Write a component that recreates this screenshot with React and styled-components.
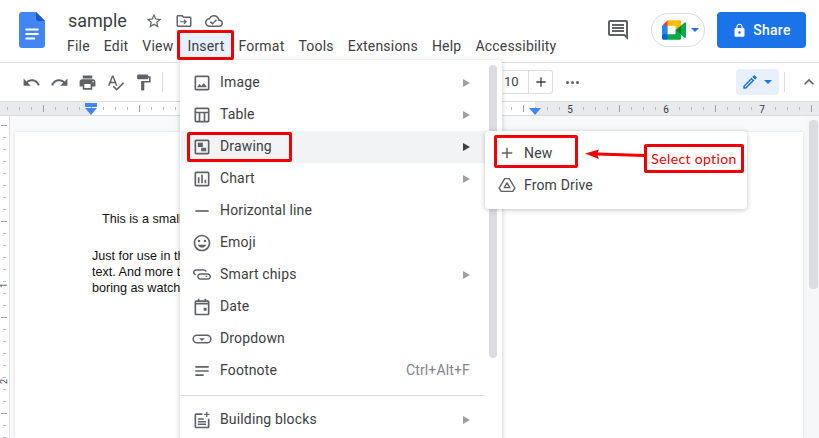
import React from 'react';
import styled, { createGlobalStyle } from 'styled-components';

const GlobalStyle = createGlobalStyle`
  html, body {
    margin: 0;
    padding: 0;
    background: #fff;
    overflow: hidden;
  }
  body {
    font-family: Roboto, "Liberation Sans", sans-serif;
  }
`;

const Shell = styled.div`
  position: relative;
  width: 819px;
  height: 438px;
  overflow: hidden;
  display: flex;
  flex-direction: column;
  background: #fff;
`;

const Header = styled.header`
  height: 63px;
  flex: none;
  display: flex;
  align-items: flex-start;
  padding: 12px 13px 0 19px;
  box-sizing: border-box;
  border-bottom: 1px solid #dadce0;
`;

const TitleBlock = styled.div`
  margin-left: 22px;
  display: flex;
  flex-direction: column;
  flex: 1;
`;

const TitleRow = styled.div`
  display: flex;
  align-items: center;
  height: 18px;
  margin-left: 1px;
`;

const Title = styled.span`
  font-size: 18px;
  color: #3c4043;
  width: 77px;
  line-height: 18px;
`;

const TitleIcons = styled.div`
  display: flex;
  gap: 12px;
`;

const NavBar = styled.nav`
  display: flex;
  gap: 14px;
  margin-top: 8px;
`;

const NavItem = styled.span`
  position: relative;
  font-size: 14px;
  line-height: 16px;
  letter-spacing: 0.2px;
  color: #3c4043;

  ${p => p.$active && `
    &::before {
      content: '';
      position: absolute;
      left: -7px;
      right: -7px;
      top: -4px;
      bottom: -4px;
      background: #e8f0fe;
      z-index: 0;
    }
    &::after {
      content: '';
      position: absolute;
      left: -10px;
      right: -10px;
      top: -8px;
      bottom: -6px;
      border: 3px solid #f00000;
      border-radius: 2px;
    }
  `}
`;

const NavLabel = styled.span`
  position: relative;
  z-index: 1;
`;

const HeaderRight = styled.div`
  display: flex;
  align-items: center;
  height: 36px;
`;

const MeetPill = styled.div`
  width: 54px;
  height: 34px;
  box-sizing: border-box;
  border: 1px solid #dadce0;
  border-radius: 17px;
  margin: 0 12px 0 21px;
  display: flex;
  align-items: center;
  padding-left: 10px;
  gap: 5px;
`;

const ShareButton = styled.button`
  width: 89px;
  height: 36px;
  border: none;
  border-radius: 4px;
  background: #1a73e8;
  color: #fff;
  font: 500 14px Roboto, sans-serif;
  letter-spacing: 0.25px;
  display: flex;
  align-items: center;
  justify-content: center;
  gap: 6px;
  padding: 0;
`;

const Toolbar = styled.div`
  height: 38px;
  flex: none;
  display: flex;
  align-items: center;
  padding-left: 22px;
  box-sizing: border-box;
`;

const ToolGroup = styled.div`
  display: flex;
  align-items: center;
  gap: ${p => p.$gap || 9}px;
  margin-left: ${p => p.$left || 0}px;
`;

const VDivider = styled.span`
  width: 1px;
  height: 20px;
  background: #dadce0;
  margin: 0 ${p => p.$right || 0}px 0 ${p => p.$left || 0}px;
`;

const SizeBox = styled.div`
  display: flex;
  height: 24px;
  box-sizing: border-box;
  border: 1px solid #dadce0;
  border-left: none;
  border-radius: 0 3px 3px 0;
`;

const SizeValue = styled.span`
  width: 26px;
  box-sizing: border-box;
  padding-left: 1px;
  font-size: 13px;
  line-height: 22px;
  color: #3c4043;
  border-right: 1px solid #dadce0;
`;

const SizePlus = styled.span`
  width: 23px;
  display: flex;
  align-items: center;
  justify-content: center;
`;

const MoreDots = styled.span`
  display: flex;
  gap: 2px;
  margin-left: 4px;

  i {
    width: 3px;
    height: 3px;
    border-radius: 50%;
    background: #5f6368;
  }
`;

const EditMode = styled.div`
  width: 43px;
  height: 26px;
  margin-left: 157px;
  border-radius: 4px;
  background: #e8f0fe;
  display: flex;
  align-items: center;
  padding-left: 5px;
  box-sizing: border-box;
  gap: 5px;
`;

const Caret = styled.span`
  width: 0;
  height: 0;
  border-left: 4px solid transparent;
  border-right: 4px solid transparent;
  border-top: 4px solid ${p => p.$color || '#1a73e8'};
`;

const RulerBar = styled.div`
  height: 15px;
  flex: none;
  box-sizing: border-box;
  border-top: 1px solid #dadce0;
  border-bottom: 1px solid #dadce0;
`;

const Workspace = styled.div`
  flex: 1;
  min-height: 0;
  display: flex;
  background: #f8f9fa;
`;

const SideRuler = styled.div`
  width: 10px;
  flex: none;
  background: #fff;
  border-right: 1px solid #dadce0;
  box-sizing: border-box;
`;

const PageArea = styled.div`
  flex: 1;
  min-width: 0;
  padding: 16px 3px 0 5px;
`;

const Page = styled.div`
  height: 100%;
  background: #fff;
  box-shadow: 0 0 3px rgba(60, 64, 67, 0.18);
  padding-top: 79px;
  box-sizing: border-box;
`;

const DocLine = styled.div`
  font: 12.6px/16px "Liberation Sans", Arial, sans-serif;
  color: #111;
  white-space: nowrap;
  margin-left: ${p => p.$indent}px;
  margin-top: ${p => p.$gap || 0}px;
`;

const ScrollTrack = styled.div`
  width: 13px;
  flex: none;
  background: #f6f7f9;
  padding: 4px 1px 0 3px;
  box-sizing: border-box;
`;

const ScrollThumb = styled.div`
  height: 169px;
  border-radius: 4px;
  background: #dadce0;
`;

const Menu = styled.div`
  position: absolute;
  left: 180px;
  top: 60px;
  width: 322px;
  height: 390px;
  background: #fff;
  border-radius: 4px;
  box-shadow: 0 1px 5px rgba(60, 64, 67, 0.3);
  padding-top: 7px;
  box-sizing: border-box;
`;

const MenuRow = styled.div`
  position: relative;
  height: 32px;
  width: 309px;
  margin-left: 1px;
  display: flex;
  align-items: center;
  padding: 0 20px 0 11px;
  box-sizing: border-box;
  background: ${p => (p.$hover ? '#f1f3f4' : 'transparent')};
  font-size: 14px;
  letter-spacing: 0.15px;
  color: #3c4043;
`;

const MenuLabel = styled.span`
  flex: 1;
  margin: -2px 0 0 8px;
`;

const Shortcut = styled.span`
  color: #80868b;
  font-size: 14px;
  margin-top: -2px;
`;

const SubArrow = styled.span`
  width: 0;
  height: 0;
  border-top: 4px solid transparent;
  border-bottom: 4px solid transparent;
  border-left: 7px solid ${p => (p.$hover ? '#3c4043' : '#9aa0a6')};
`;

const MenuRule = styled.div`
  width: 304px;
  height: 1px;
  background: #dadce0;
  margin: 8px 0 8px 1px;
`;

const MenuScroll = styled.div`
  position: absolute;
  left: 309px;
  top: 5px;
  width: 8px;
  height: 293px;
  border-radius: 4px;
  background: #dadce0;
`;

const Highlight = styled.div`
  position: absolute;
  border: 3px solid #f00000;
  border-radius: 2px;
  box-sizing: border-box;
`;

const DrawingBox = styled(Highlight)`
  left: 6px;
  top: 1px;
  width: 105px;
  height: 30px;
`;

const SubMenu = styled.div`
  position: absolute;
  left: 485px;
  top: 131px;
  width: 262px;
  height: 78px;
  background: #fff;
  border-radius: 4px;
  box-shadow: 0 1px 5px rgba(60, 64, 67, 0.3);
  padding-top: 6px;
  box-sizing: border-box;
`;

const SubRow = styled.div`
  position: relative;
  height: 32px;
  display: flex;
  align-items: center;
  gap: ${p => p.$gap}px;
  padding-left: ${p => p.$pad}px;
  font-size: 14px;
  letter-spacing: 0.15px;
  color: #3c4043;
`;

const NewBox = styled(Highlight)`
  left: 9px;
  top: -2px;
  width: 84px;
  height: 33px;
`;

const Callout = styled.div`
  position: absolute;
  left: 644px;
  top: 144px;
  width: 100px;
  height: 29px;
  box-sizing: border-box;
  border: 3px solid #f00000;
  border-radius: 2px;
  background: #fff;
  color: #f00000;
  font: 14px/23px Lato, "Liberation Sans", sans-serif;
  letter-spacing: 0.35px;
  text-align: center;
  white-space: nowrap;
`;

const ArrowSvg = styled.svg`
  position: absolute;
  left: 583px;
  top: 145px;
`;

const Glyph = styled.svg`
  display: block;
  flex: none;
  fill: ${p => p.$color || '#5f6368'};
`;

const paths = {
  undo: 'M12.5 8c-2.65 0-5.05.99-6.9 2.6L2 7v9h9l-3.62-3.62c1.39-1.16 3.16-1.88 5.12-1.88 3.54 0 6.55 2.31 7.6 5.5l2.37-.78C21.08 11.03 17.15 8 12.5 8z',
  redo: 'M18.4 10.6C16.55 8.99 14.15 8 11.5 8c-4.65 0-8.58 3.03-9.96 7.22L3.9 16c1.05-3.19 4.05-5.5 7.6-5.5 1.95 0 3.73.72 5.12 1.88L13 16h9V7l-3.6 3.6z',
  print: 'M19 8H5c-1.66 0-3 1.34-3 3v6h4v4h12v-4h4v-6c0-1.66-1.34-3-3-3zm-3 11H8v-5h8v5zm3-7c-.55 0-1-.45-1-1s.45-1 1-1 1 .45 1 1-.45 1-1 1zm-1-9H6v4h12V3z',
  spell: 'M12.45 16h2.09L9.43 3H7.57L2.46 16h2.09l1.12-3h5.64l1.14 3zm-6.02-5L8.5 5.48 10.57 11H6.43zm15.16.59l-8.09 8.09L9.83 16l-1.41 1.41 5.09 5.09L23 13l-1.41-1.41z',
  paint: 'M18 4V3c0-.55-.45-1-1-1H5c-.55 0-1 .45-1 1v4c0 .55.45 1 1 1h12c.55 0 1-.45 1-1V6h1v4H9v11c0 .55.45 1 1 1h2c.55 0 1-.45 1-1v-9h8V4h-3z',
  star: 'M22 9.24l-7.19-.62L12 2 9.19 8.63 2 9.24l5.46 4.73L5.82 21 12 17.27 18.18 21l-1.63-7.03L22 9.24zM12 15.4l-3.76 2.27 1-4.28-3.32-2.88 4.38-.38L12 6.1l1.71 4.04 4.38.38-3.32 2.88 1 4.28L12 15.4z',
  folder: 'M20 6h-8l-2-2H4c-1.1 0-2 .9-2 2v12c0 1.1.9 2 2 2h16c1.1 0 2-.9 2-2V8c0-1.1-.9-2-2-2zm0 12H4V6h5.17l2 2H20v10zM12.6 9.6l-1.2 1.2 1.4 1.4H7v1.6h5.8l-1.4 1.4 1.2 1.2 3.4-3.4z',
  cloud: 'M19.35 10.04C18.67 6.59 15.64 4 12 4 9.11 4 6.6 5.64 5.35 8.04 2.34 8.36 0 10.91 0 14c0 3.31 2.69 6 6 6h13c2.76 0 5-2.24 5-5 0-2.64-2.05-4.78-4.65-4.96zM19 18H6c-2.21 0-4-1.79-4-4 0-2.05 1.53-3.76 3.56-3.97l1.07-.11.5-.95C8.08 7.14 9.94 6 12 6c2.62 0 4.88 1.86 5.39 4.43l.3 1.5 1.53.11c1.56.1 2.78 1.41 2.78 2.96 0 1.65-1.35 3-3 3zm-9-3.82l-2.09-2.09L6.5 13.5 10 17l6.01-6.01-1.41-1.41z',
  comment: 'M21.99 4c0-1.1-.89-2-1.99-2H4c-1.1 0-2 .9-2 2v12c0 1.1.9 2 2 2h14l4 4-.01-18zM20 4v13.17L18.83 16H4V4h16zM6 12h12v2H6zm0-3h12v2H6zm0-3h12v2H6z',
  lock: 'M18 8h-1V6c0-2.76-2.24-5-5-5S7 3.24 7 6v2H6c-1.1 0-2 .9-2 2v10c0 1.1.9 2 2 2h12c1.1 0 2-.9 2-2V10c0-1.1-.9-2-2-2zm-6 9c-1.1 0-2-.9-2-2s.9-2 2-2 2 .9 2 2-.9 2-2 2zm3.1-9H8.9V6c0-1.71 1.39-3.1 3.1-3.1 1.71 0 3.1 1.39 3.1 3.1v2z',
  edit: 'M3 17.25V21h3.75L17.81 9.94l-3.75-3.75L3 17.25zM5.92 19H5v-.92l9.06-9.06.92.92L5.92 19zM20.71 5.63l-2.34-2.34a.996.996 0 0 0-1.41 0l-1.83 1.83 3.75 3.75 1.83-1.83a.996.996 0 0 0 0-1.41z',
  chevron: 'M7.41 15.41 12 10.83l4.59 4.58L18 14l-6-6-6 6z',
  plus: 'M19 13h-6v6h-2v-6H5v-2h6V5h2v6h6v2z',
  image: 'M19 5v14H5V5h14m0-2H5c-1.1 0-2 .9-2 2v14c0 1.1.9 2 2 2h14c1.1 0 2-.9 2-2V5c0-1.1-.9-2-2-2zm-4.86 8.86l-3 3.87L9 13.14 6 17h12l-3.86-5.14z',
  table: 'M5 3h14c1.1 0 2 .9 2 2v14c0 1.1-.9 2-2 2H5c-1.1 0-2-.9-2-2V5c0-1.1.9-2 2-2zm0 2v3h14V5H5zm0 5v9h3v-9H5zm5 0v9h4v-9h-4zm6 0v9h3v-9h-3z',
  drawing: 'M19 5v14H5V5h14m0-2H5c-1.1 0-2 .9-2 2v14c0 1.1.9 2 2 2h14c1.1 0 2-.9 2-2V5c0-1.1-.9-2-2-2zM7 7h6v5h-6zM11 12.8h6V17h-6z',
  chart: 'M19 3H5c-1.1 0-2 .9-2 2v14c0 1.1.9 2 2 2h14c1.1 0 2-.9 2-2V5c0-1.1-.9-2-2-2zm0 16H5V5h14v14zM7 10h2v7H7zm4-3h2v10h-2zm4 6h2v4h-2z',
  line: 'M4 11h16v2H4z',
  emoji: 'M12 2C6.48 2 2 6.48 2 12s4.48 10 10 10 10-4.48 10-10S17.52 2 12 2zm0 18c-4.42 0-8-3.58-8-8s3.58-8 8-8 8 3.58 8 8-3.58 8-8 8zm3.5-9a1.5 1.5 0 1 0 0-3 1.5 1.5 0 0 0 0 3zm-7 0a1.5 1.5 0 1 0 0-3 1.5 1.5 0 0 0 0 3zm3.5 6.5c2.33 0 4.31-1.46 5.11-3.5H6.89c.8 2.04 2.78 3.5 5.11 3.5z',
  chips: 'M5 5h9c1.9 0 3.4 1.3 3.8 3H16c-.3-.7-1.1-1.2-2-1.2H5C3.9 6.8 3 7.7 3 8.8s.7 1.8 1.6 2V12.6C2.6 12.4 1.2 10.8 1.2 8.8 1.2 6.7 2.9 5 5 5zm5 5h9c2.1 0 3.8 1.7 3.8 3.8s-1.7 3.8-3.8 3.8h-9c-2.1 0-3.8-1.7-3.8-3.8S7.9 10 10 10zm0 1.8c-1.1 0-2 .9-2 2s.9 2 2 2h9c1.1 0 2-.9 2-2s-.9-2-2-2h-9zm5.6 1.2h3.4l-1.7 1.8z',
  date: 'M19 4h-2V2h-2v2H9V2H7v2H5c-1.1 0-2 .9-2 2v14c0 1.1.9 2 2 2h14c1.1 0 2-.9 2-2V6c0-1.1-.9-2-2-2zm0 16H5V9h14v11zM19 7H5V6h14v1zm-5 6h3.5v3.5H14z',
  dropdown: 'M6 6.5h12c3.04 0 5.5 2.46 5.5 5.5s-2.46 5.5-5.5 5.5H6A5.5 5.5 0 0 1 .5 12 5.5 5.5 0 0 1 6 6.5zm0 1.8a3.7 3.7 0 0 0 0 7.4h12a3.7 3.7 0 0 0 0-7.4H6zM8.5 11h7L12 14.5z',
  footnote: 'M4 6h16v2H4zm0 5h16v2H4zm0 5h10v2H4z',
  blocks: 'M17 2v2.5h-2.5v1.5H17v2.5h1.5V6H21V4.5h-2.5V2H17zM5 4c-1.1 0-2 .9-2 2v14c0 1.1.9 2 2 2h14c1.1 0 2-.9 2-2v-9.500h-2V20H5V6h7.500V4H5zm2 6v1.800h7V10H7zm0 3.100v1.800h10v-1.800H7zm0 3.100V18h10v-1.800H7z',
};

const Icon = ({ name, size = 18, color }) => (
  <Glyph viewBox="0 0 24 24" width={size} height={size} $color={color}>
    <path d={paths[name]} />
  </Glyph>
);

const DriveIcon = () => (
  <svg width="18" height="18" viewBox="0 0 24 24" fill="none" stroke="#5f6368" strokeLinejoin="round">
    <path d="M9 3.500h6l7.500 12.500-2.800 4.500H4.300L1.500 16z" strokeWidth="1.900" />
    <path d="M12 9l3.700 6.500H8.300z" strokeWidth="1.800" />
  </svg>
);

const DocsLogo = () => (
  <svg width="26" height="36" viewBox="0 0 26 36">
    <path d="M3 0h14l9 9v24c0 1.700-1.300 3-3 3H3c-1.700 0-3-1.300-3-3V3c0-1.700 1.300-3 3-3z" fill="#4285f4" />
    <path d="M17 0l9 9h-6.500c-1.400 0-2.500-1.100-2.500-2.500z" fill="#1a56c4" />
    <path d="M6.500 16.500h13v2h-13zm0 4.500h13v2h-13zm0 4.500h9.500v2H6.500z" fill="#fff" />
  </svg>
);

const MeetLogo = () => (
  <svg width="24" height="20" viewBox="0 0 87.500 72">
    <path fill="#00832d" d="M49.500 36l8.530 9.750 11.470 7.330 2-17.020-2-16.640-11.690 6.440z" />
    <path fill="#0066da" d="M0 51.500V66c0 3.315 2.685 6 6 6h14.500l3-10.960-3-9.540-9.950-3z" />
    <path fill="#e94235" d="M20.500 0L0 20.500l10.550 3 9.950-3 2.950-9.410z" />
    <path fill="#2684fc" d="M20.500 20.500H0v31h20.500z" />
    <path fill="#00ac47" d="M82.600 8.680L69.500 19.420v33.660l13.160 10.790c1.970 1.540 4.850.135 4.850-2.370V11c0-2.535-2.945-3.925-4.910-2.320zM49.500 36v15.500h-29V72h43c3.315 0 6-2.685 6-6V53.080z" />
    <path fill="#ffba00" d="M63.500 0h-43v20.500h29V36l20-16.570V6c0-3.315-2.685-6-6-6z" />
  </svg>
);

const TopRuler = () => {
  const ticks = [];
  for (let x = 7; x < 819; x += 12) {
    const long = (x - 43) % 96 === 0;
    ticks.push(<rect key={x} x={x} y={long ? 3 : 5} width="1" height={long ? 7 : 3} fill={long ? '#9aa0a6' : '#b4b8bd'} />);
  }
  return (
    <svg width="819" height="13" style={{ display: 'block' }}>
      <rect width="819" height="13" fill="#e8eaed" />
      <rect x="91" width="444" height="13" fill="#fff" />
      {ticks}
      {[5, 6, 7].map(n => (
        <text key={n} x={91 + 96 * n - 1} y="11" fontSize="10" fontFamily="Roboto" fill="#3c4043" textAnchor="middle">{n}</text>
      ))}
      <rect x="85" y="1" width="12" height="4" fill="#4285f4" />
      <path d="M85 6h12l-6 7z" fill="#4285f4" />
      <path d="M529 6h12l-6 7z" fill="#4285f4" />
    </svg>
  );
};

const LeftRuler = () => {
  const ticks = [];
  for (let y = 9; y < 323; y += 12) {
    const long = (y - 9) % 96 === 0;
    ticks.push(<rect key={y} x={long ? 1 : 3} y={y} width={long ? 6 : 3} height="1" fill={long ? '#9aa0a6' : '#b4b8bd'} />);
  }
  return (
    <svg width="9" height="323" style={{ display: 'block' }}>
      {ticks}
      <text x="0" y="0" fontSize="9" fontFamily="Roboto" fill="#3c4043" transform="translate(7 172) rotate(-90)">1</text>
      <text x="0" y="0" fontSize="9" fontFamily="Roboto" fill="#3c4043" transform="translate(7 268) rotate(-90)">2</text>
    </svg>
  );
};

const menuItems = [
  { icon: 'image', label: 'Image', sub: true },
  { icon: 'table', label: 'Table', sub: true },
  { icon: 'drawing', label: 'Drawing', sub: true, hover: true },
  { icon: 'chart', label: 'Chart', sub: true },
  { icon: 'line', label: 'Horizontal line' },
  { icon: 'emoji', label: 'Emoji' },
  { icon: 'chips', label: 'Smart chips', sub: true },
  { icon: 'date', label: 'Date' },
  { icon: 'dropdown', label: 'Dropdown' },
  { icon: 'footnote', label: 'Footnote', shortcut: 'Ctrl+Alt+F' },
];

const navItems = ['File', 'Edit', 'View', 'Insert', 'Format', 'Tools', 'Extensions', 'Help', 'Accessibility'];

const renderRow = item => (
  <MenuRow key={item.label} $hover={item.hover}>
    {item.hover && <DrawingBox />}
    <Icon name={item.icon} size={20} />
    <MenuLabel>{item.label}</MenuLabel>
    {item.shortcut && <Shortcut>{item.shortcut}</Shortcut>}
    {item.sub && <SubArrow $hover={item.hover} />}
  </MenuRow>
);

export default function App() {
  return (
    <Shell>
      <GlobalStyle />
      <Header>
        <DocsLogo />
        <TitleBlock>
          <TitleRow>
            <Title>sample</Title>
            <TitleIcons>
              <Icon name="star" size={18} />
              <Icon name="folder" size={18} />
              <Icon name="cloud" size={18} />
            </TitleIcons>
          </TitleRow>
          <NavBar>
            {navItems.map(item => (
              <NavItem key={item} $active={item === 'Insert'}>
                <NavLabel>{item}</NavLabel>
              </NavItem>
            ))}
          </NavBar>
        </TitleBlock>
        <HeaderRight>
          <Icon name="comment" size={24} />
          <MeetPill>
            <MeetLogo />
            <Caret />
          </MeetPill>
          <ShareButton>
            <Icon name="lock" size={15} color="#fff" />
            Share
          </ShareButton>
        </HeaderRight>
      </Header>

      <Toolbar>
        <ToolGroup>
          <Icon name="undo" size={19} />
          <Icon name="redo" size={19} />
          <Icon name="print" size={19} />
          <Icon name="spell" size={19} />
          <Icon name="paint" size={19} />
        </ToolGroup>
        <VDivider $left={9} />
        <ToolGroup $left={340}>
          <SizeBox>
            <SizeValue>10</SizeValue>
            <SizePlus><Icon name="plus" size={16} color="#3c4043" /></SizePlus>
          </SizeBox>
          <MoreDots><i /><i /><i /></MoreDots>
        </ToolGroup>
        <EditMode>
          <Icon name="edit" size={18} color="#1a73e8" />
          <Caret />
        </EditMode>
        <VDivider $left={5} />
        <ToolGroup $left={14}>
          <Icon name="chevron" size={20} />
        </ToolGroup>
      </Toolbar>

      <RulerBar>
        <TopRuler />
      </RulerBar>

      <Workspace>
        <SideRuler>
          <LeftRuler />
        </SideRuler>
        <PageArea>
          <Page>
            <DocLine $indent={87}>This is a small</DocLine>
            <DocLine $indent={77} $gap={21}>Just for use in the</DocLine>
            <DocLine $indent={77}>text. And more text</DocLine>
            <DocLine $indent={77}>boring as watching</DocLine>
          </Page>
        </PageArea>
        <ScrollTrack>
          <ScrollThumb />
        </ScrollTrack>
      </Workspace>

      <Menu>
        {menuItems.map(renderRow)}
        <MenuRule />
        {renderRow({ icon: 'blocks', label: 'Building blocks', sub: true })}
        <MenuScroll />
      </Menu>

      <SubMenu>
        <SubRow $pad={13} $gap={8}>
          <NewBox />
          <Icon name="plus" size={18} />
          New
        </SubRow>
        <SubRow $pad={13} $gap={8}>
          <DriveIcon />
          From Drive
        </SubRow>
      </SubMenu>

      <ArrowSvg width="62" height="18" viewBox="0 0 62 18">
        <path d="M2 8.500 16 4.500l-1.500 3L61 9v3l-46.500-1.500L16 14z" fill="#f00000" />
      </ArrowSvg>
      <Callout>Select option</Callout>
    </Shell>
  );
}
